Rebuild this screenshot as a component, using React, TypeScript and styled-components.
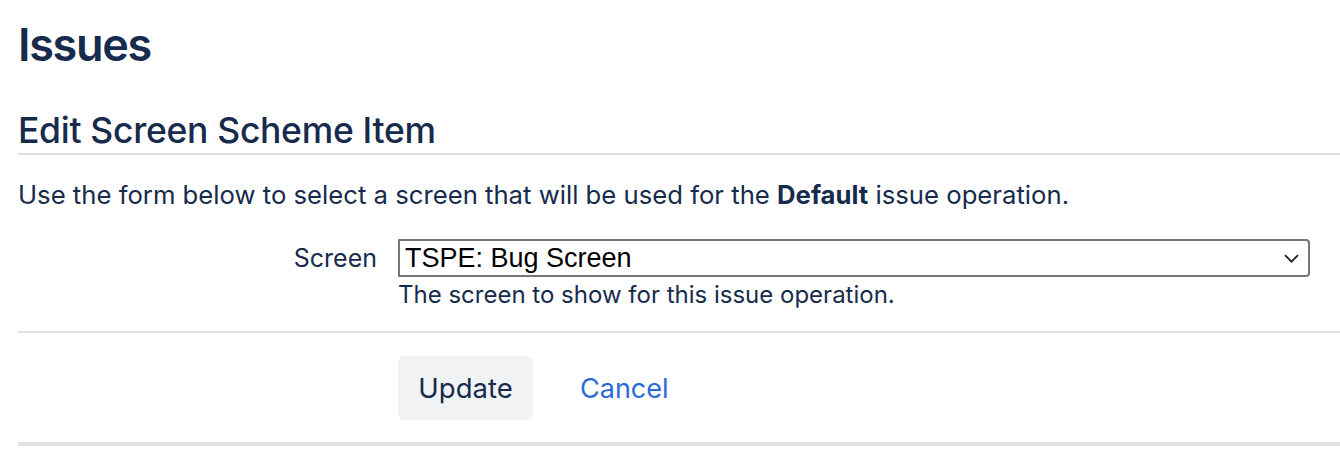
import styled, { createGlobalStyle } from "styled-components";

const GlobalStyle = createGlobalStyle`
  html, body {
    margin: 0;
    padding: 0;
    background: #ffffff;
  }
  body {
    font-family: Inter, "Noto Sans", sans-serif;
    color: #172b4d;
  }
`;

const Page = styled.main`
  padding: 0 0 0 18px;
`;

const PageTitle = styled.h1`
  margin: 0;
  padding-top: 17px;
  font-size: 45px;
  line-height: 56px;
  font-weight: 600;
  letter-spacing: -1.3px;
`;

const SectionTitle = styled.h2`
  margin: 0;
  margin-top: 36px;
  font-size: 35.5px;
  line-height: 44px;
  font-weight: 500;
  letter-spacing: -0.3px;
  border-bottom: 2px solid #dfe1e6;
`;

const Intro = styled.p`
  margin: 22px 0 0;
  font-size: 25.7px;
  line-height: 36px;

  strong {
    font-weight: 700;
  }
`;

const Form = styled.form`
  margin-top: 26px;
`;

const FieldRow = styled.div`
  display: grid;
  grid-template-columns: 359px 1fr;
  column-gap: 21px;
  padding-bottom: 18px;
  border-bottom: 2px solid #dfe1e6;
`;

const Label = styled.label`
  text-align: right;
  font-size: 25px;
  line-height: 38px;
`;

const Field = styled.div`
  display: flex;
  flex-direction: column;
  width: 912px;
`;

const SelectBox = styled.div`
  height: 38px;
  box-sizing: border-box;
  border: 2px solid #767676;
  border-radius: 0 4px 4px 0;
  display: flex;
  align-items: center;
  padding: 0 9px 0 5px;
  font-family: "Liberation Sans", Arial, sans-serif;
  font-size: 27px;
  color: #000000;
`;

const Chevron = styled.svg`
  margin-left: auto;
  width: 15px;
  height: 9px;
`;

const Description = styled.div`
  font-size: 24px;
  line-height: 36px;
  color: #172b4d;
`;

const Actions = styled.div`
  display: flex;
  align-items: center;
  gap: 47px;
  padding: 23px 0 22px 380px;
  border-bottom: 4px solid #dfe1e6;
`;

const Button = styled.button`
  height: 64px;
  width: 135px;
  border: none;
  border-radius: 6px;
  background: #f1f2f4;
  color: #172b4d;
  font-family: Inter, "Noto Sans", sans-serif;
  font-size: 27.5px;
  cursor: pointer;
`;

const CancelLink = styled.a`
  color: #2a6ad9;
  font-size: 27px;
  text-decoration: none;
`;

export default function App() {
  return (
    <>
      <GlobalStyle />
      <Page>
        <PageTitle>Issues</PageTitle>
        <SectionTitle>Edit Screen Scheme Item</SectionTitle>
        <Intro>
          Use the form below to select a screen that will be used for the{" "}
          <strong>Default</strong> issue operation.
        </Intro>
        <Form>
          <FieldRow>
            <Label>Screen</Label>
            <Field>
              <SelectBox>
                TSPE: Bug Screen
                <Chevron viewBox="0 0 15 9">
                  <path d="M1 1.2 L7.5 7.7 L14 1.2" fill="none" stroke="#222" strokeWidth="1.8" />
                </Chevron>
              </SelectBox>
              <Description>The screen to show for this issue operation.</Description>
            </Field>
          </FieldRow>
          <Actions>
            <Button type="button">Update</Button>
            <CancelLink href="#">Cancel</CancelLink>
          </Actions>
        </Form>
      </Page>
    </>
  );
}
